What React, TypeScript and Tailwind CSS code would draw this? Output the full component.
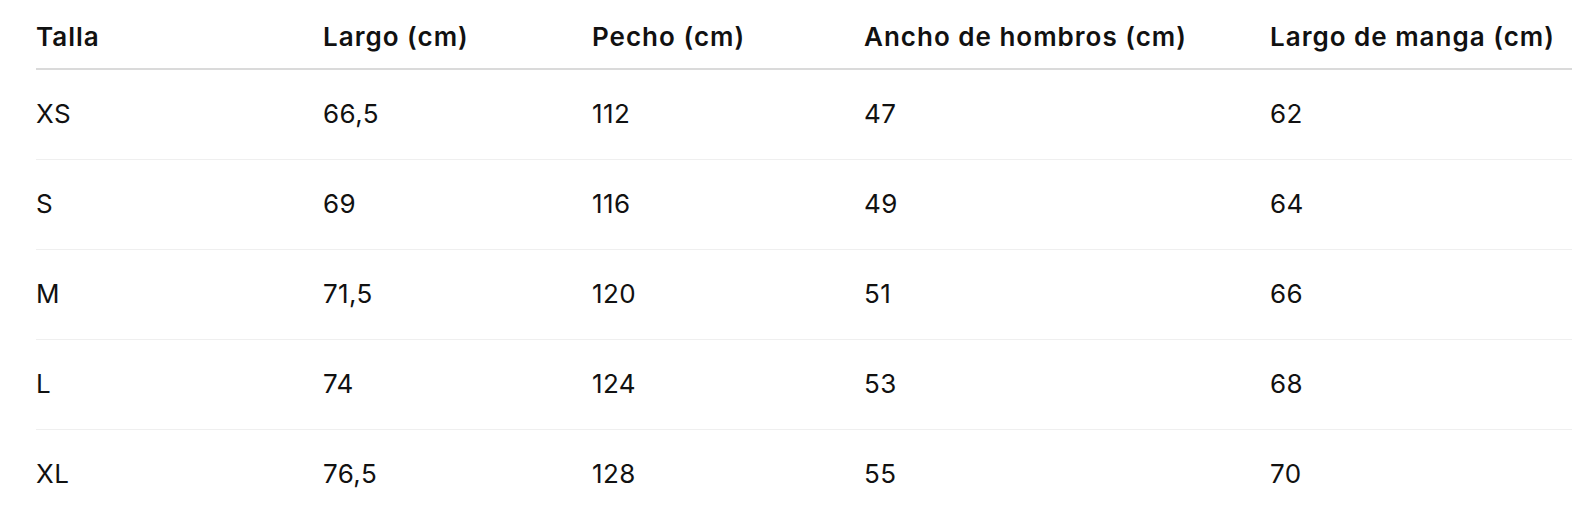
import React from "react";

const headers = ["Talla", "Largo (cm)", "Pecho (cm)", "Ancho de hombros (cm)", "Largo de manga (cm)"];
const rows = [
  ["XS", "66,5", "112", "47", "62"],
  ["S", "69", "116", "49", "64"],
  ["M", "71,5", "120", "51", "66"],
  ["L", "74", "124", "53", "68"],
  ["XL", "76,5", "128", "55", "70"],
];
const widths = ["w-[287px]", "w-[269px]", "w-[272px]", "w-[406px]", "w-[302px]"];

export default function App() {
  return (
    <div className="min-h-screen bg-white pl-[36px] text-[#111111]" style={{ fontFamily: "Inter, 'Noto Sans', sans-serif" }}>
      <table className="w-[1536px] table-fixed border-collapse">
        <colgroup>
          {widths.map((w, i) => (
            <col key={i} className={w} />
          ))}
        </colgroup>
        <thead>
          <tr className="border-b-2 border-[#dadada]">
            {headers.map((h) => (
              <th key={h} className="h-[69px] pt-[6px] text-left align-middle text-[26px] font-semibold leading-[36px] tracking-[1px] whitespace-nowrap">
                {h}
              </th>
            ))}
          </tr>
        </thead>
        <tbody>
          {rows.map((r) => (
            <tr key={r[0]} className="border-b border-[#efefef]">
              {r.map((c, i) => (
                <td key={i} className="h-[90px] text-left align-middle text-[26px] font-normal leading-[36px] tracking-[0.4px]">
                  {c}
                </td>
              ))}
            </tr>
          ))}
        </tbody>
      </table>
    </div>
  );
}
